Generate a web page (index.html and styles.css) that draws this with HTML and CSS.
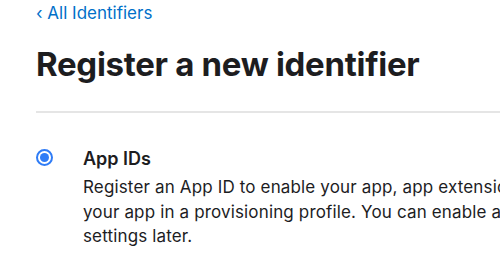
FILE: index.html
```html
<!DOCTYPE html>
<html lang="en">
<head>
<meta charset="utf-8">
<title>Register a new identifier</title>
<link rel="stylesheet" href="styles.css">
</head>
<body>
<div class="page">
  <a class="back" href="#"><span class="chev">‹</span> All Identifiers</a>
  <h1 class="title">Register a new identifier</h1>
  <hr class="divider">
  <div class="option">
    <span class="radio"><span class="dot"></span></span>
    <div class="option-body">
      <div class="option-title">App IDs</div>
      <p class="option-desc">Register an App ID to enable your app, app extensions, or App Clip to access available services and identify<br>your app in a provisioning profile. You can enable app services when you create an App ID or modify these<br>settings later.</p>
    </div>
  </div>
</div>
</body>
</html>
```
FILE: styles.css
```css
html, body {
  margin: 0;
  padding: 0;
  background: #ffffff;
  overflow: hidden;
}
body {
  font-family: Inter, "Liberation Sans", sans-serif;
  color: #1d1d1f;
}
.page {
  width: 1100px;
  padding: 0 0 0 36px;
}
.back {
  display: block;
  color: #0070c9;
  text-decoration: none;
  font-size: 17px;
  line-height: 20px;
  padding-top: 3px;
}
.title {
  margin: 21px 0 0 0;
  font-size: 33px;
  line-height: 40px;
  font-weight: 700;
  letter-spacing: -0.3px;
}
.divider {
  margin: 27px 0 0 0;
  border: 0;
  height: 2px;
  background: #e5e5e5;
}
.option {
  display: flex;
  gap: 22px;
  margin-top: 35px;
}
.radio {
  flex: none;
  width: 17px;
  height: 17px;
  box-sizing: border-box;
  border-radius: 50%;
  border: 2px solid #2f7cf6;
  display: flex;
  align-items: center;
  justify-content: center;
  margin-top: 1px;
}
.dot {
  width: 9px;
  height: 9px;
  border-radius: 50%;
  background: #2f7cf6;
}
.option-body {
  flex: 1;
  padding-left: 8px;
}
.option-title {
  font-size: 18px;
  line-height: 22px;
  font-weight: 600;
}
.option-desc {
  margin: 5px 0 0 0;
  font-size: 17px;
  line-height: 24.5px;
  letter-spacing: 0.15px;
  white-space: nowrap;
}
```
